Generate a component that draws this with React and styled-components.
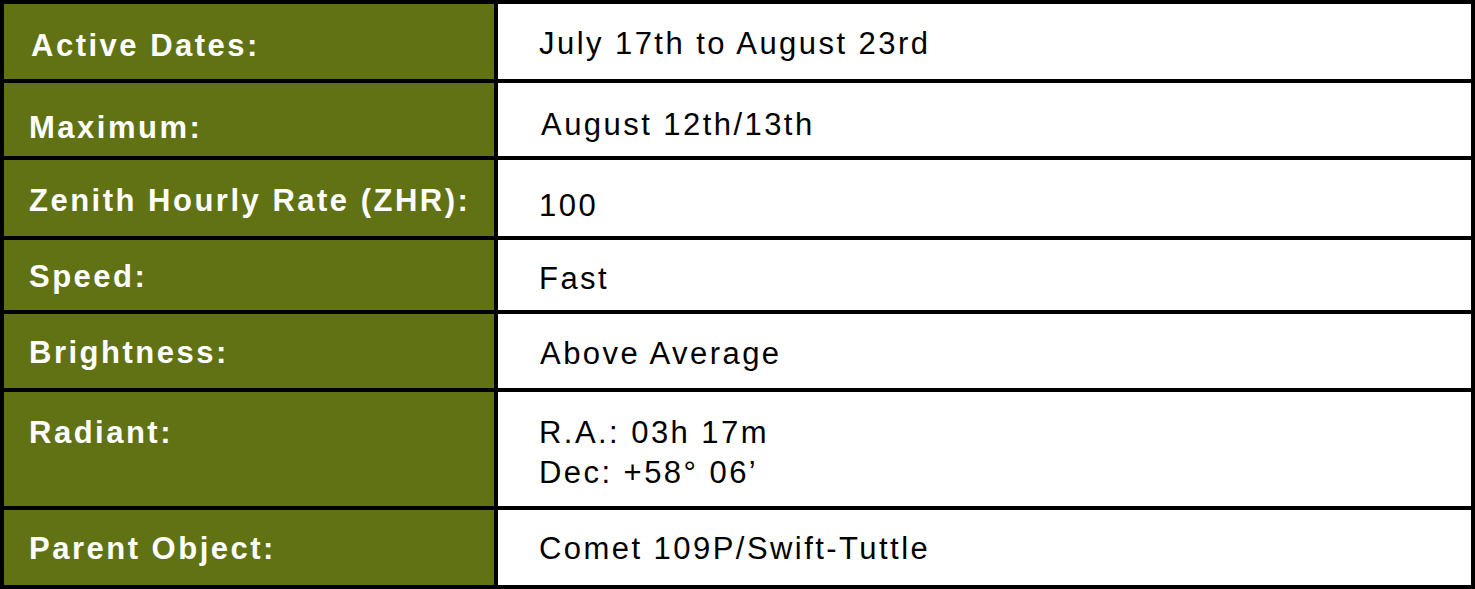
import React from 'react';
import styled, { createGlobalStyle } from 'styled-components';

const GlobalStyle = createGlobalStyle`
  html, body {
    margin: 0;
    padding: 0;
    background: #ffffff;
  }
`;

const Table = styled.div`
  width: 1475px;
  box-sizing: border-box;
  display: flex;
  flex-direction: column;
  gap: 4px;
  padding: 4px;
  background: #000000;
  font-family: 'Liberation Sans', Arial, sans-serif;
`;

const Row = styled.div`
  display: grid;
  grid-template-columns: 490px 1fr;
  gap: 4px;
  height: ${props => props.h}px;
`;

// centred cells get nudged down a little by doubling the shift as top padding
const Label = styled.div`
  display: flex;
  align-items: ${props => (props.top ? 'flex-start' : 'center')};
  padding: ${props => (props.top ? 21 : props.dy * 2)}px 0 0 ${props => props.dx || 25}px;
  box-sizing: border-box;
  background: #607213;
  color: #ffffff;
  font-weight: bold;
  font-size: 31px;
  letter-spacing: 2.5px;
  line-height: 40px;
`;

const Value = styled.div`
  display: flex;
  flex-direction: column;
  justify-content: ${props => (props.top ? 'flex-start' : 'center')};
  padding: ${props => (props.top ? 21 : props.dy * 2)}px 0 0 ${props => props.dx || 41}px;
  box-sizing: border-box;
  background: #ffffff;
  color: #000000;
  font-size: 31px;
  letter-spacing: 2.45px;
  line-height: 40px;
`;

const rows = [
  { label: 'Active Dates:', value: ['July 17th to August 23rd'], h: 75, ly: 4, vy: 2, lx: 27 },
  { label: 'Maximum:', value: ['August 12th/13th'], h: 73, ly: 8, vy: 5, vx: 43 },
  { label: 'Zenith Hourly Rate (ZHR):', value: ['100'], h: 76, ly: 3, vy: 8 },
  { label: 'Speed:', value: ['Fast'], h: 70, ly: 2, vy: 4 },
  { label: 'Brightness:', value: ['Above Average'], h: 74, ly: 2, vy: 3, vx: 42 },
  { label: 'Radiant:', value: ['R.A.: 03h 17m', 'Dec: +58° 06’'], h: 114, top: true },
  { label: 'Parent Object:', value: ['Comet 109P/Swift-Tuttle'], h: 75, ly: 1, vy: 1 },
];

export default function App() {
  return (
    <>
      <GlobalStyle />
      <Table>
        {rows.map(row => (
          <Row key={row.label} h={row.h}>
            <Label top={row.top} dy={row.ly || 0} dx={row.lx}>
              {row.label}
            </Label>
            <Value top={row.top} dy={row.vy || 0} dx={row.vx}>
              {row.value.map(line => (
                <span key={line}>{line}</span>
              ))}
            </Value>
          </Row>
        ))}
      </Table>
    </>
  );
}
